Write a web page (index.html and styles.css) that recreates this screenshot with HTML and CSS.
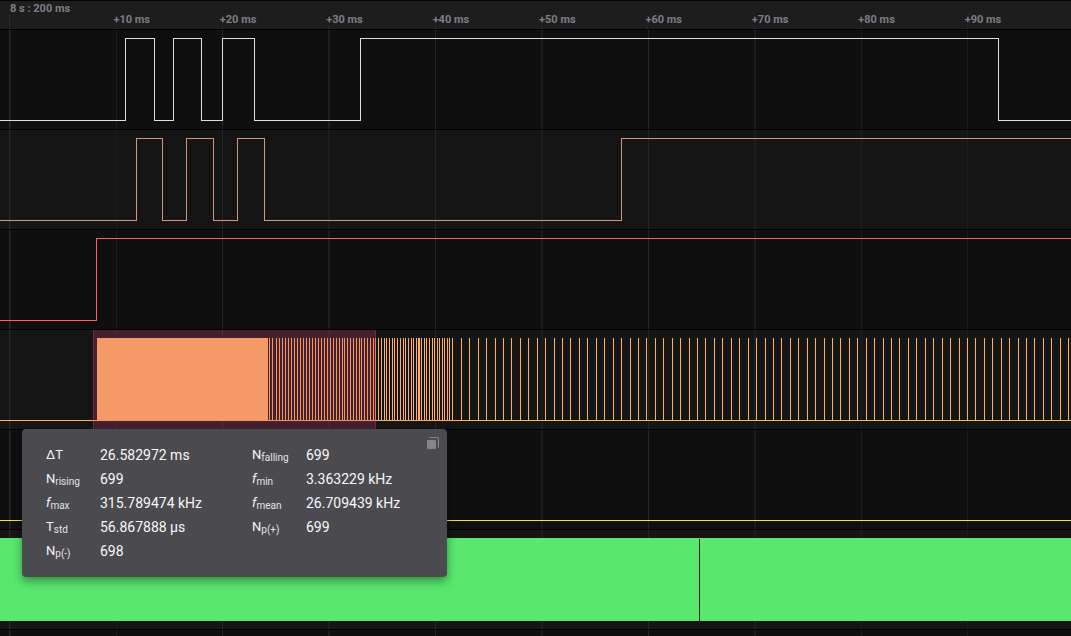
FILE: index.html
```html
<!DOCTYPE html>
<html lang="en">
<head>
<meta charset="utf-8">
<title>Logic analyzer</title>
<link rel="stylesheet" href="styles.css">
</head>
<body>
<svg class="defs" aria-hidden="true">
  <defs>
    <g id="grid">
      <path class="grid-line strong" d="M9.5 0V100M222.5 0V100M435.5 0V100M648.5 0V100"/>
      <path class="grid-line" d="M10.5 0V100M116.5 0V100M328.5 0V100M329.5 0V100M541.5 0V100M542.5 0V100M754.5 0V100M755.5 0V100M861.5 0V100M967.5 0V100"/>
    </g>
  </defs>
</svg>
<main class="chart">
  <header class="ruler">
    <div class="tick major"><span class="label">8 s : 200 ms</span></div>
    <div class="tick"><span class="label">+10 ms</span></div>
    <div class="tick"><span class="label">+20 ms</span></div>
    <div class="tick"><span class="label">+30 ms</span></div>
    <div class="tick"><span class="label">+40 ms</span></div>
    <div class="tick"><span class="label">+50 ms</span></div>
    <div class="tick"><span class="label">+60 ms</span></div>
    <div class="tick"><span class="label">+70 ms</span></div>
    <div class="tick"><span class="label">+80 ms</span></div>
    <div class="tick"><span class="label">+90 ms</span></div>
  </header>

  <section class="track"><svg class="plot" viewBox="0 0 1071 99" preserveAspectRatio="none">
    <use href="#grid"/>
    <path class="wave white" d="M0 90.5H125.5V8.5H154.5V90.5H173.5V8.5H201.5V90.5H222.5V8.5H254.5V90.5H360.5V8.5H998.5V90.5H1071"/>
  </svg></section>

  <section class="track"><svg class="plot" viewBox="0 0 1071 99" preserveAspectRatio="none">
    <use href="#grid"/>
    <path class="wave brown" d="M0 90.5H136.5V8.5H162.5V90.5H186.5V8.5H213.5V90.5H237.5V8.5H264.5V90.5H621.5V8.5H1071"/>
  </svg></section>

  <section class="track"><svg class="plot" viewBox="0 0 1071 99" preserveAspectRatio="none">
    <use href="#grid"/>
    <path class="wave red" d="M0 90.5H96.5V8.5H1071"/>
  </svg></section>

  <section class="track"><svg class="plot" viewBox="0 0 1071 99" preserveAspectRatio="none">
    <use href="#grid"/>
    <rect class="orange-fill" x="97" y="8" width="171" height="83"/>
    <path class="wave orange" d="M0 90.5H1071"/>
    <path class="wave orange" id="pulses"/>
    <rect class="selection" x="93" y="0" width="283" height="99"/>
    <path class="selection-edge" d="M93.5 0V99M375.5 0V99"/>
  </svg></section>

  <section class="track"><svg class="plot" viewBox="0 0 1071 99" preserveAspectRatio="none">
    <use href="#grid"/>
    <path class="wave yellow" d="M0 90.5H1071"/>
  </svg></section>

  <section class="track"><svg class="plot" viewBox="0 0 1071 99" preserveAspectRatio="none">
    <use href="#grid"/>
    <rect class="green-fill" x="0" y="8" width="1071" height="83"/>
    <path class="wave gap" d="M699.5 9V91"/>
  </svg></section>

  <section class="track rest"><svg class="plot" viewBox="0 0 1071 99" preserveAspectRatio="none">
    <use href="#grid"/>
  </svg></section>

  <aside class="measure">
    <dl class="stats">
      <dt>ΔT</dt><dd>26.582972 ms</dd>
      <dt>N<sub>falling</sub></dt><dd>699</dd>
      <dt>N<sub>rising</sub></dt><dd>699</dd>
      <dt><i>f</i><sub>min</sub></dt><dd>3.363229 kHz</dd>
      <dt><i>f</i><sub>max</sub></dt><dd>315.789474 kHz</dd>
      <dt><i>f</i><sub>mean</sub></dt><dd>26.709439 kHz</dd>
      <dt>T<sub>std</sub></dt><dd>56.867888 µs</dd>
      <dt>N<sub>p(+)</sub></dt><dd>699</dd>
      <dt>N<sub>p(-)</sub></dt><dd>698</dd>
    </dl>
    <button class="copy" type="button" aria-label="Copy measurements">
      <svg class="copy-icon" viewBox="0 0 12 12" aria-hidden="true">
        <path class="copy-back" d="M2 .5H10.5Q11.5 .5 11.5 1.5V10.5"/>
        <rect x="0" y="3" width="9" height="9" rx="1"/>
      </svg>
    </button>
  </aside>
</main>
<script src="pulses.js"></script>
</body>
</html>
```
FILE: styles.css
```css
* {
  box-sizing: border-box;
}

body {
  margin: 0;
  background: #0f0f0f;
  font-family: Roboto, "Liberation Sans", sans-serif;
}

.defs {
  position: absolute;
  width: 0;
  height: 0;
}

.chart {
  position: relative;
  display: flex;
  flex-direction: column;
  height: 100vh;
  overflow: hidden;
}

.ruler {
  display: flex;
  flex: none;
  height: 30px;
  padding-left: 9px;
  overflow: hidden;
  background: #1d1d1d;
  border-top: 1px solid #000;
  border-bottom: 1px solid #000;
}

.tick {
  flex: 0 0 10.02%;
  padding-top: 12px;
  background: linear-gradient(#2a2a2a, #2a2a2a) 0 25px / 1px 3px no-repeat;
}

.tick.major {
  padding-top: 1px;
  background-position: 0 13px;
  background-size: 1px 15px;
}

.label {
  display: block;
  margin-left: -2px;
  color: #7d7d87;
  font-size: 11px;
  font-weight: 700;
  line-height: 13px;
  white-space: nowrap;
}

.major .label {
  margin-left: 1px;
}

.track {
  flex: none;
  height: 100px;
  background: #0f0f0f;
  border-bottom: 1px solid #000;
}

.track:nth-of-type(even) {
  background: #151515;
}

.track.rest {
  flex: 1 1 0;
  min-height: 0;
  overflow: hidden;
  border-bottom: 0;
}

.plot {
  display: block;
  width: 100%;
  height: 99px;
  shape-rendering: crispEdges;
}

.grid-line,
.wave,
.selection-edge {
  fill: none;
  stroke-width: 1px;
  vector-effect: non-scaling-stroke;
}

.grid-line { stroke: #1d1d1d; }
.grid-line.strong { stroke: #262626; }
.white { stroke: #dce0dc; }
.brown { stroke: #d29778; }
.red { stroke: #ff5c6c; }
.orange { stroke: #ffb05a; }
.yellow { stroke: #f5dc4b; }
.gap { stroke: #151515; }
.orange-fill { fill: #ffb760; }
.green-fill { fill: #59e76e; }
.selection { fill: rgba(216, 68, 124, 0.25); }
.selection-edge { stroke: rgba(216, 68, 124, 0.3); }

.measure {
  position: absolute;
  top: 429px;
  left: 22px;
  width: 425px;
  padding: 14px 24px;
  background: #4a4a4f;
  border-radius: 4px;
  box-shadow: 0 4px 10px rgba(0, 0, 0, 0.4);
  color: #f8f8f9;
}

.stats {
  display: grid;
  grid-template-columns: 54px 152px 54px 1fr;
  grid-auto-rows: 24px;
  margin: 0;
  font-size: 14px;
  line-height: 24px;
  white-space: nowrap;
}

.stats dt {
  font-size: 13px;
}

.stats dd {
  margin: 0;
}

.stats sub {
  font-size: 10px;
  line-height: 0;
  vertical-align: -2px;
  color: #e4e4e6;
}

.copy {
  position: absolute;
  top: 8px;
  right: 8px;
  display: block;
  width: 12px;
  height: 12px;
  padding: 0;
  background: none;
  border: 0;
}

.copy-icon {
  display: block;
  width: 12px;
  height: 12px;
  fill: #858590;
}

.copy-back {
  fill: none;
  stroke: #858590;
}
```
FILE: pulses.js
```js
const dense = [
  269, 272, 276, 279, 282, 285, 288, 291, 294, 297, 300, 303, 306, 309, 312,
  315, 318, 321, 324, 327, 330, 333, 336, 339, 342, 344, 347, 350, 353, 356,
  359, 361, 364, 367, 370, 373, 375, 378, 381, 384, 386, 389, 392, 394, 397,
  400, 403, 405, 408, 411, 413, 416, 418, 419, 421, 424, 426, 429, 432, 434,
  437, 439, 442, 444, 447, 449, 452
];

const sparse = [
  461, 469, 478, 486, 495, 503, 511, 520, 528, 537, 545, 554, 562, 570, 579,
  587, 596, 604, 613, 621, 630, 638, 646, 655, 663, 672, 680, 689, 697, 705,
  714, 722, 731, 739, 748, 756, 765, 773, 781, 790, 798, 807, 815, 824, 832,
  840, 849, 857, 866, 874, 883, 891, 899, 908, 916, 925, 933, 942, 950, 959,
  967, 975, 984, 992, 1001, 1009, 1018, 1026, 1034, 1043, 1051, 1060, 1068
];

document.getElementById("pulses").setAttribute(
  "d",
  dense.concat(sparse).map((x) => `M${x + 0.5} 8V91`).join("")
);
```
